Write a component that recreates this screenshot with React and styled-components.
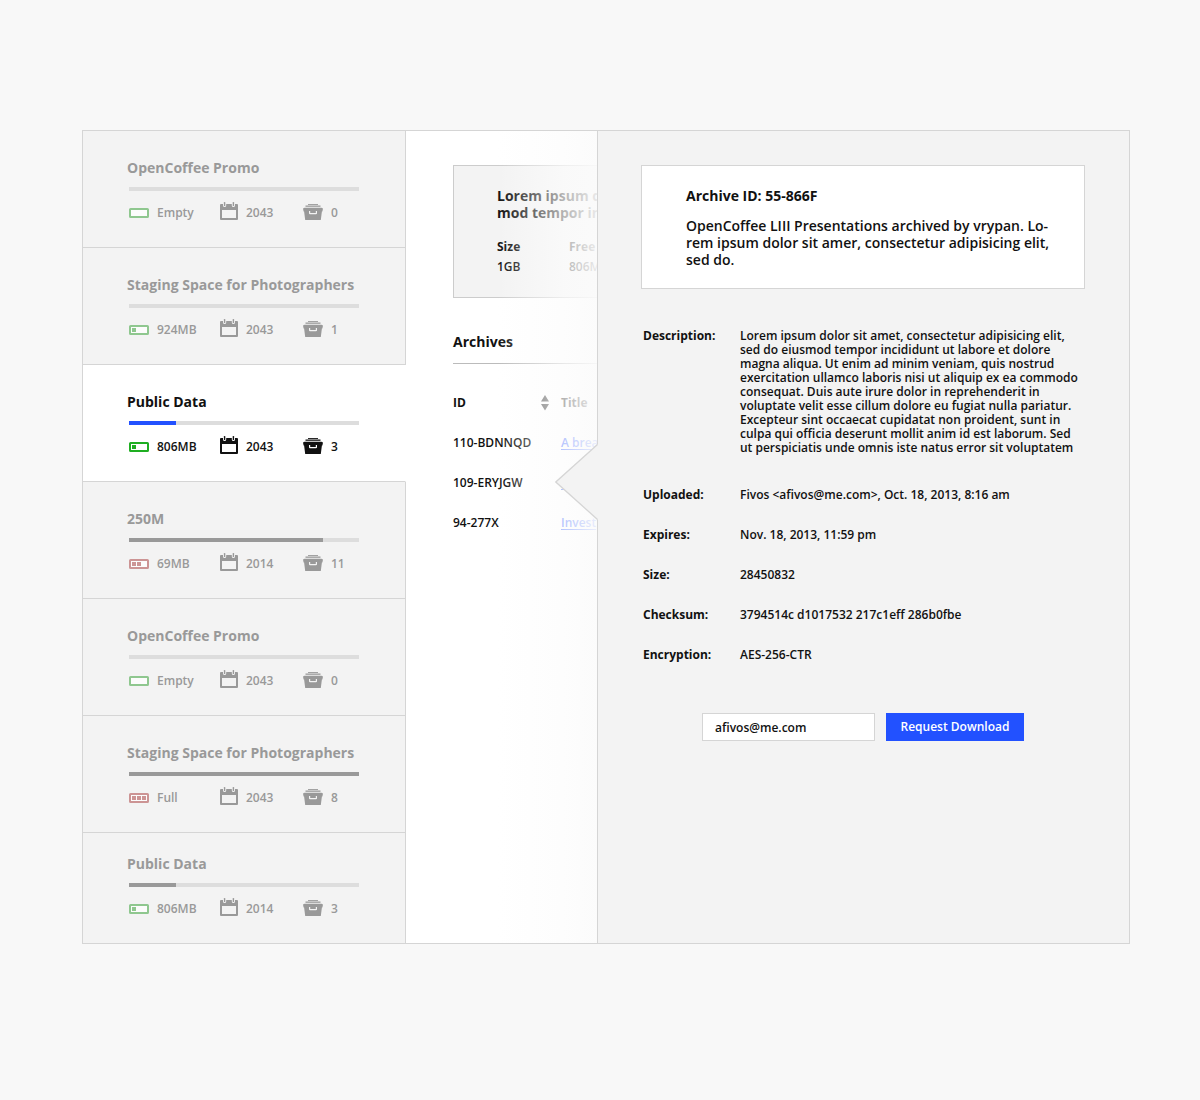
import React from "react";
import styled, { createGlobalStyle } from "styled-components";

const ink = "#111";
const muted = "#999";
const line = "#d5d5d5";
const panel = "#f3f3f3";
const blue = "#2251ff";

const GlobalStyle = createGlobalStyle`
  * { box-sizing: border-box; }
  body {
    margin: 0;
    background: #f8f8f8;
    color: ${ink};
    font: 600 12px/14px "Open Sans", "Noto Sans", sans-serif;
  }
  h2, h3, p, ul, dl, dd { margin: 0; padding: 0; }
  ul { list-style: none; }
`;

const Frame = styled.main`
  display: grid;
  grid-template-columns: 323px 191px minmax(0, 1fr);
  margin: 130px 70px 156px 82px;
  border: 1px solid ${line};
  background: #fff;
`;

/* Spaces list */

const SpaceItem = styled.li`
  background: ${(p) => (p.$active ? "#fff" : panel)};
  border-right: 1px solid ${(p) => (p.$active ? "#fff" : line)};
  border-bottom: 1px solid ${line};
  &:last-child { border-bottom: 0; }
`;

const SpaceLink = styled.a`
  display: block;
  padding: 28px 46px 23px 44px;
  color: ${(p) => (p.$active ? ink : muted)};
  text-decoration: none;
  ${SpaceItem}:last-child & { padding-top: 22px; }
`;

const Title = styled.h3`
  font-size: 14px;
  line-height: 17px;
  font-weight: 700;
`;

const Track = styled.div`
  height: 4px;
  margin: 11px 0 11px 2px;
  background: #ddd;
`;

const Fill = styled.div`
  height: 4px;
  background: ${(p) => (p.$active ? blue : muted)};
`;

const Stats = styled.div`
  display: grid;
  grid-template-columns: 91px 83px 1fr;
  margin-left: 2px;
`;

const Stat = styled.span`
  display: flex;
  align-items: center;
  gap: 8px;
`;

function Battery({ level, low, active }) {
  const color = low ? "#cc9494" : active ? "#1fae22" : "#8fc78f";
  return (
    <svg width="20" height="22" viewBox="0 0 20 22" fill={color} aria-hidden="true">
      <rect x="1" y="7" width="18" height="8" rx="0.6" fill="#fff" fillOpacity="0.7" stroke={color} strokeWidth="2" />
      {[3, 8, 13].slice(0, level).map((x) => (
        <rect key={x} x={x} y="9" width="4" height="4" />
      ))}
    </svg>
  );
}

function Calendar() {
  return (
    <svg width="18" height="22" viewBox="0 0 18 22" fill="currentColor" aria-hidden="true">
      <path
        fillRule="evenodd"
        d="M1 2h2v1.500a1.600 1.600 0 0 0 3.200 0V2h5.600v1.500a1.600 1.600 0 0 0 3.200 0V2h2a1 1 0 0 1 1 1v14a1 1 0 0 1-1 1H1a1 1 0 0 1-1-1V3a1 1 0 0 1 1-1zM2 8v8h14V8z"
      />
      <rect x="3.900" y="0" width="1.400" height="4" rx="0.600" />
      <rect x="12.700" y="0" width="1.400" height="4" rx="0.600" />
    </svg>
  );
}

function Drawer() {
  return (
    <svg width="20" height="22" viewBox="0 0 20 22" fill="currentColor" aria-hidden="true">
      <rect x="5" y="2" width="10" height="0.900" />
      <rect x="2.500" y="3.500" width="15" height="1.300" />
      <path
        fillRule="evenodd"
        d="M1.500 5.800h17L20 6.500 19.400 9.500h-.5L17.800 18H2.200L1.100 9.500H.6L0 6.500zM6 9v2.200a1 1 0 0 0 1 1h6a1 1 0 0 0 1-1V9h-1.200v2H7.200V9z"
      />
    </svg>
  );
}

const spaces = [
  { name: "OpenCoffee Promo", used: 0, level: 0, free: "Empty", year: 2043, archives: 0 },
  { name: "Staging Space for Photographers", used: 0, level: 1, free: "924MB", year: 2043, archives: 1 },
  { name: "Public Data", used: 20.5, level: 1, free: "806MB", year: 2043, archives: 3, active: true },
  { name: "250M", used: 84.4, level: 2, low: true, free: "69MB", year: 2014, archives: 11 },
  { name: "OpenCoffee Promo", used: 0, level: 0, free: "Empty", year: 2043, archives: 0 },
  { name: "Staging Space for Photographers", used: 100, level: 3, low: true, free: "Full", year: 2043, archives: 8 },
  { name: "Public Data", used: 20.5, level: 1, free: "806MB", year: 2014, archives: 3 },
];

function Space({ space }) {
  const { name, used, level, low, free, year, archives, active } = space;
  return (
    <SpaceItem $active={active}>
      <SpaceLink href="#space" $active={active} aria-current={active}>
        <Title>{name}</Title>
        <Track>
          <Fill $active={active} style={{ width: `${used}%` }} />
        </Track>
        <Stats>
          <Stat><Battery level={level} low={low} active={active} />{free}</Stat>
          <Stat><Calendar />{year}</Stat>
          <Stat><Drawer />{archives}</Stat>
        </Stats>
      </SpaceLink>
    </SpaceItem>
  );
}

/* Selected space, running under the detail sheet */

const Preview = styled.section`
  position: relative;
  overflow: hidden;
  padding: 34px 0 0 47px;
  white-space: nowrap;
  &::after {
    content: "";
    position: absolute;
    inset: 0;
    background: linear-gradient(to right, rgba(252, 252, 252, 0) 48%, rgba(252, 252, 252, 0.7) 83%, rgba(251, 251, 251, 0.86) 95%, rgba(251, 251, 251, 0.92) 100%);
    pointer-events: none;
  }
`;

const Summary = styled.div`
  padding: 21px 0 20px 43px;
  border: 1px solid #ccc;
  border-right: 0;
  background: ${panel};
`;

const Facts = styled.table`
  width: 144px;
  margin-top: 16px;
  table-layout: fixed;
  border-collapse: collapse;
  line-height: 20px;
  th, td { padding: 0; text-align: left; }
  th { font-weight: 700; }
`;

const Heading = styled.h2`
  margin-top: 35px;
  padding-bottom: 13px;
  border-bottom: 1px solid #bbb;
  font-size: 14px;
  line-height: 17px;
  font-weight: 700;
`;

const Archives = styled.table`
  width: 216px;
  margin-top: 19px;
  table-layout: fixed;
  border-collapse: collapse;
  th, td { height: 40px; padding: 0; text-align: left; }
  th { font-weight: 700; }
`;

const SortHead = styled.span`
  display: flex;
  align-items: center;
  justify-content: space-between;
  padding-right: 12px;
`;

const TitleLink = styled.a`
  color: ${blue};
  text-decoration: underline 1px;
  text-underline-offset: 2px;
`;

/* Detail sheet */

const Detail = styled.section`
  position: relative;
  padding: 34px 44px 34px 43px;
  border-left: 1px solid ${line};
  background: ${panel};
`;

const Pointer = styled.svg`
  position: absolute;
  top: 312px;
  left: -43px;
`;

const Card = styled.div`
  padding: 21px 30px 20px 44px;
  border: 1px solid ${line};
  background: #fff;
  p {
    margin-top: 13px;
    font-size: 14px;
    line-height: 17px;
  }
`;

const Properties = styled.dl`
  display: grid;
  grid-template-columns: 97px 1fr;
  row-gap: 26px;
  margin: 40px 0 0 2px;
  dt { font-weight: 700; }
  dd:first-of-type { padding-bottom: 7px; }
`;

const RequestForm = styled.form`
  display: flex;
  justify-content: center;
  gap: 11px;
  margin-top: 51px;
`;

const Email = styled.input`
  width: 173px;
  height: 28px;
  padding: 0 12px;
  border: 1px solid ${line};
  border-radius: 0;
  background: #fff;
  color: ${ink};
  font: inherit;
`;

const Submit = styled.button`
  width: 138px;
  height: 28px;
  padding: 0;
  border: 0;
  background: ${blue};
  color: #fff;
  font: inherit;
`;

const description = [
  "Lorem ipsum dolor sit amet, consectetur adipisicing elit,",
  "sed do eiusmod tempor incididunt ut labore et dolore",
  "magna aliqua. Ut enim ad minim veniam, quis nostrud",
  "exercitation ullamco laboris nisi ut aliquip ex ea commodo",
  "consequat. Duis aute irure dolor in reprehenderit in",
  "voluptate velit esse cillum dolore eu fugiat nulla pariatur.",
  "Excepteur sint occaecat cupidatat non proident, sunt in",
  "culpa qui officia deserunt mollit anim id est laborum. Sed",
  "ut perspiciatis unde omnis iste natus error sit voluptatem",
].join(" ");

const properties = [
  ["Description:", description],
  ["Uploaded:", "Fivos <afivos@me.com>, Oct. 18, 2013, 8:16 am"],
  ["Expires:", "Nov. 18, 2013, 11:59 pm"],
  ["Size:", "28450832"],
  ["Checksum:", "3794514c d1017532 217c1eff 286b0fbe"],
  ["Encryption:", "AES-256-CTR"],
];

export default function App() {
  return (
    <>
      <GlobalStyle />
      <Frame>
        <ul>
          {spaces.map((space, i) => <Space key={i} space={space} />)}
        </ul>

        <Preview>
          <Summary>
            <Title>Lorem ipsum d<br />mod tempor in</Title>
            <Facts>
              <thead><tr><th>Size</th><th>Free</th></tr></thead>
              <tbody><tr><td>1GB</td><td>806M</td></tr></tbody>
            </Facts>
          </Summary>
          <Heading>Archives</Heading>
          <Archives>
            <thead>
              <tr>
                <th>
                  <SortHead>
                    ID
                    <svg width="8" height="16" viewBox="0 0 8 16" fill="#555" aria-hidden="true">
                      <path d="M4 0l4 6.500H0zM4 15.500l4-6.500H0z" />
                    </svg>
                  </SortHead>
                </th>
                <th>Title</th>
              </tr>
            </thead>
            <tbody>
              <tr><td>110-BDNNQD</td><td><TitleLink href="#110-BDNNQD">A brea</TitleLink></td></tr>
              <tr><td>109-ERYJGW</td><td><TitleLink href="#109-ERYJGW">A</TitleLink></td></tr>
              <tr><td>94-277X</td><td><TitleLink href="#94-277X">Invest</TitleLink></td></tr>
            </tbody>
          </Archives>
        </Preview>

        <Detail>
          <Pointer width="43" height="78" viewBox="0 0 43 78" aria-hidden="true">
            <path d="M43 1L42.500 1.500.8 39 42.500 76.500 43 77z" fill={panel} />
            <path d="M42.500 1.500L.8 39 42.500 76.500" fill="none" stroke={line} strokeWidth="1.300" />
          </Pointer>
          <Card>
            <Title>Archive ID: 55-866F</Title>
            <p>OpenCoffee LIII Presentations archived by vrypan. Lo-<br />rem ipsum dolor sit amer, consectetur adipisicing elit,<br />sed do.</p>
          </Card>
          <Properties>
            {properties.map(([term, value]) => (
              <React.Fragment key={term}>
                <dt>{term}</dt>
                <dd>{value}</dd>
              </React.Fragment>
            ))}
          </Properties>
          <RequestForm onSubmit={(e) => e.preventDefault()}>
            <Email type="email" aria-label="Email" defaultValue="afivos@me.com" />
            <Submit type="submit">Request Download</Submit>
          </RequestForm>
        </Detail>
      </Frame>
    </>
  );
}
